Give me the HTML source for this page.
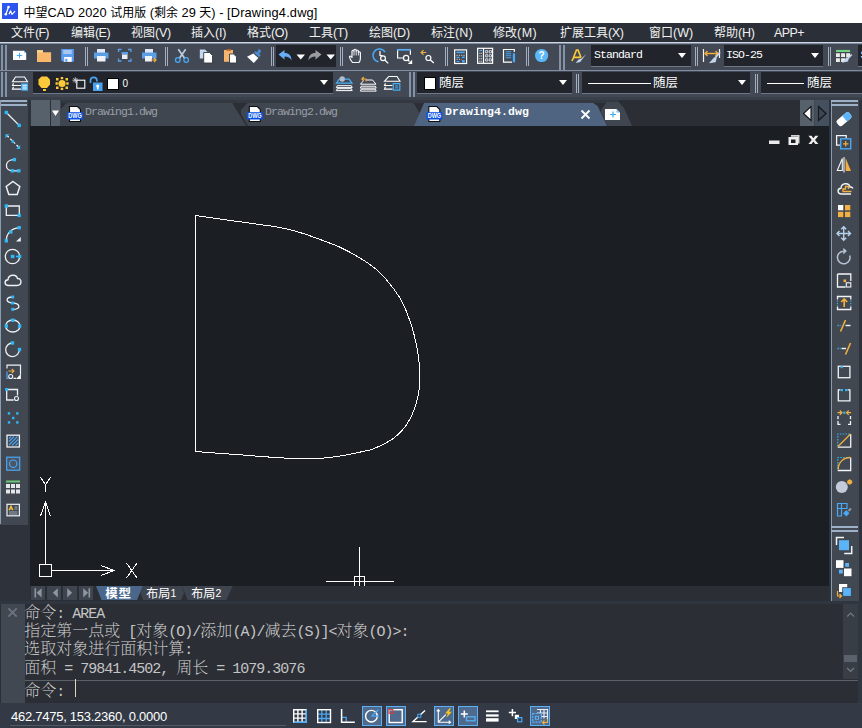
<!DOCTYPE html>
<html lang="zh"><head><meta charset="utf-8"><title>ZWCAD</title>
<style>
*{box-sizing:border-box;margin:0;padding:0}
html,body{width:862px;height:728px;overflow:hidden;background:#2e333b}
body{font-family:"Liberation Sans","Noto Sans CJK SC",sans-serif;position:relative}
.a{position:absolute}
#title{left:0;top:0;width:862px;height:23px;background:#fff}
#title .t{left:23.5px;top:4px;font-size:12.8px;line-height:18px;color:#000;white-space:nowrap}
#title .t b{font-weight:normal;font-size:12px}
#title .t u{text-decoration:none;letter-spacing:.17px}
#menu{left:0;top:23px;width:862px;height:19px;background:#2b3038}
#menu span{position:absolute;top:2px;font-size:12px;line-height:17px;color:#f0f0f0;white-space:nowrap}
#menu i{font-style:normal;font-size:12.5px}
#tb1{left:0;top:42px;width:862px;height:28px;background:#424954}
#tb2{left:0;top:71px;width:862px;height:26px;background:#424954}
.grip{position:absolute;width:2px;background:#8392a6}
.sep{position:absolute;width:1px;background:#a3afc0}
.combo{position:absolute;background:#21242b}
.combo .tx{position:absolute;color:#fff;white-space:nowrap}
.arr{position:absolute;width:0;height:0;border-left:4px solid transparent;border-right:4px solid transparent;border-top:5px solid #fff}
svg{position:absolute;overflow:visible}
#canvas{left:30px;top:126px;width:799px;height:460px;background:#1b1e23}
#ltb{left:0;top:100px;width:28px;height:425px;background:#414852}
#rtb{left:831px;top:100px;width:28px;height:501px;background:#414852}
#tabs{left:31px;top:100px;width:798px;height:26px;background:#2b2e34}
#lay{left:30px;top:586px;width:799px;height:15px;background:#2b2e34}
#cmd{left:0;top:604px;width:858px;height:99px;background:#2b2e34}
#status{left:0;top:703px;width:862px;height:25px;background:#333a45}
.mono{font-family:"Liberation Mono",monospace}
.cl{position:absolute;left:24.3px;white-space:nowrap;color:#d4d4d4;height:18px;line-height:18px}
.cl .c{font-family:"Noto Serif CJK SC",serif;font-size:16px;font-weight:200}
.cl .l{font-family:"Liberation Mono",monospace;font-size:15px;letter-spacing:-1px;color:#c4c4c4}
</style></head><body>
<div id="title" class="a">
<svg style="left:2px;top:3px" width="16" height="16" viewBox="0 0 16 16"><defs><linearGradient id="lg" x1="0" y1="0" x2="1" y2="1"><stop offset="0" stop-color="#2a5af2"/><stop offset="1" stop-color="#2f4fe8"/></linearGradient></defs><rect width="16" height="16" fill="url(#lg)"/><path d="M6.400 4.200L3.900 11.200" stroke="#fff" stroke-width="1.300" fill="none"/><circle cx="6.500" cy="4.100" r="1.300" fill="#fff"/><circle cx="3.800" cy="11.300" r="1.300" fill="#fff"/><path d="M7 11.200l1.600-3.400l1.300 3.600l3.200-3.200" stroke="#fff" stroke-width="1.200" fill="none" stroke-linejoin="round"/></svg>
<div class="a t"><b>中望</b>CAD 2020 <b>试用版</b> (<b>剩余</b> 29 <b>天</b>) - <u>[Drawing4.dwg]</u></div>
</div>
<div id="menu" class="a">
<span style="left:11px">文件<i style="letter-spacing:-0.73px">(F)</i></span><span style="left:71px">编辑<i style="letter-spacing:-0.56px">(E)</i></span><span style="left:131px">视图<i style="letter-spacing:-0.23px">(V)</i></span><span style="left:191px">插入<i style="letter-spacing:-0.14px">(I)</i></span><span style="left:247px">格式<i style="letter-spacing:-0.46px">(O)</i></span><span style="left:309px">工具<i style="letter-spacing:-0.36px">(T)</i></span><span style="left:369px">绘图<i style="letter-spacing:-0.09px">(D)</i></span><span style="left:431px">标注<i style="letter-spacing:0.11px">(N)</i></span><span style="left:493px">修改<i style="letter-spacing:0.51px">(M)</i></span><span style="left:560px">扩展工具<i style="letter-spacing:-0.43px">(X)</i></span><span style="left:649px">窗口<i style="letter-spacing:-0.05px">(W)</i></span><span style="left:714px">帮助<i style="letter-spacing:-0.26px">(H)</i></span><span style="left:774px"><i style="letter-spacing:-0.58px">APP+</i></span>
</div>
<div id="tb1" class="a">
<div class="a" style="left:0;top:-.500px;width:862px;height:1.500px;background:#cdd6e2"></div><div class="a" style="left:0;top:1px;width:862px;height:1.300px;background:#7f8ea3"></div>
<div class="grip" style="left:1px;top:3px;height:25px"></div><div class="grip" style="left:5px;top:3px;height:25px"></div>
<svg style="left:0;top:-42px" width="862" height="100" viewBox="0 0 862 100">
<!-- new -->
<path d="M13 50.700h11l2.200 2.200v7.100h-13.200z" fill="#fff"/><path d="M24 50.700v2.200h2.200z" fill="#8cc8f8"/><path d="M16.800 55.500h5.400M19.500 52.800v5.400" stroke="#45a8f5" stroke-width="1" fill="none"/>
<!-- open -->
<path d="M37 50.200h6v2h8.100v9.800h-14.100z" fill="#fab86c"/><path d="M37 50.200h6v2.300h-6z" fill="#fcd48e"/>
<!-- save -->
<path d="M61.200 49h12.700v12.800h-11l-1.700-1.700z" fill="#5b9cf0"/><rect x="63.200" y="50" width="8.500" height="4" fill="#a8c8f0"/><rect x="64.200" y="57" width="7.500" height="4.800" fill="#fff"/><rect x="65.300" y="58.800" width="2" height="3" fill="#5b9cf0"/>
<!-- print -->
<rect x="97" y="49" width="8" height="4" fill="#dfe9f5"/><path d="M94 52.500h14.500v6h-14.500z" fill="#5a9ee6"/><rect x="97" y="56" width="8.500" height="5.500" fill="#f0f3f7"/>
<!-- preview -->
<path d="M118.500 52v-2.500h3M128 49.500h3v2.500M131 58.500v2.500h-3M121.500 61h-3v-2.500" stroke="#5a9ee6" stroke-width="1.300" fill="none"/><rect x="121.500" y="52" width="6.500" height="2.500" fill="#5a9ee6"/><rect x="122" y="54.500" width="5.500" height="4.500" fill="#e8edf3"/>
<!-- plot -->
<rect x="145" y="49" width="8" height="4" fill="#dfe9f5"/><path d="M142 52.500h14.500v6h-14.500z" fill="#5a9ee6"/><rect x="145" y="56" width="7" height="5.500" fill="#f0f3f7"/><path d="M151 60h5M154 58l2 2l-2 2" stroke="#f3b040" stroke-width="1.200" fill="none"/>
<!-- cut -->
<path d="M178.300 49.300l6.300 9M185.700 49.300l-6.300 9" stroke="#bccbde" stroke-width="1.700" fill="none"/><circle cx="177.800" cy="60" r="2.300" fill="none" stroke="#4aa8f5" stroke-width="1.300"/><circle cx="186.200" cy="60" r="2.300" fill="none" stroke="#4aa8f5" stroke-width="1.300"/>
<!-- copy -->
<path d="M199.800 49.400h5.200l2.500 2.500v6.700h-7.700z" fill="#c5d8f0"/><path d="M203.700 52.500h5.800l3 3v7.500h-8.800z" fill="#fff" stroke="#333a44" stroke-width=".9"/>
<!-- paste -->
<path d="M224 50h9v11.800h-9z" fill="#f5b56e"/><rect x="226.500" y="49" width="4.500" height="1.800" fill="#b5622a"/><path d="M229.500 54h4.200l2.800 2.800v6.200h-7z" fill="#fff" stroke="#333a44" stroke-width=".9"/>
<!-- brush -->
<path d="M258.800 48.800l2.700 2.300l-2.300 2.800l1.600 1.500l-1.700 1.900l-5-4.500l1.700-1.900l1.600 1.400z" fill="#4a88d0"/><path d="M253.400 53.600l5 4.500l-4.600 4.800l-6.800-6.200z" fill="#fff"/>
<!-- undo redo -->
<rect x="276" y="45" width="60" height="22" fill="#21242b"/>
<path d="M278.500 54.500l6-4.500v3c4.500 0 7 2.500 7 7.500c-1.500-3-3.500-4-7-4v3z" fill="#66adf6"/>
<path d="M296.500 54.500h8.500l-4.250 5z" fill="#fff"/>
<path d="M321.500 54.500l-6-4.500v3c-4.500 0-7 2.500-7 7.500c1.500-3 3.500-4 7-4v3z" fill="#9a9c9f"/>
<path d="M326.500 54.500h8.500l-4.250 5z" fill="#fff"/>
<!-- hand -->
<path d="M352.500 62.500c-2-2.500-3-4.500-3-6c.7-.8 1.600-.3 2.500 1v-6.500c.5-1 1.500-1 2 0v-1c.5-1 1.700-1 2.200 0v1c.5-1 1.700-1 2.200 0v1.500c.5-1 1.800-.8 2 .2v5.800c0 2-.8 3-1.500 4z" fill="none" stroke="#f2f4f7" stroke-width="1.200" stroke-linejoin="round"/><path d="M354 51v4.500M356.200 50.500v5M358.400 51.500v4" stroke="#f2f4f7" stroke-width=".9"/>
<!-- zoom realtime -->
<path d="M385 52.200a6.400 6.400 0 1 0-6.500 9.500" fill="none" stroke="#4aa8f5" stroke-width="1.500"/><path d="M380 51v4.500h2.600" fill="none" stroke="#fff" stroke-width="1.200"/><circle cx="383" cy="58.200" r="2.400" fill="#424954" stroke="#fff" stroke-width="1.200"/><path d="M384.800 60l3.400 3.400" stroke="#fff" stroke-width="1.300"/>
<!-- zoom window -->
<path d="M397 49.800h14" stroke="#5aaef8" stroke-width="1.700"/><path d="M397.600 50.500v7.500h5.500M410.400 50.500v4.300" fill="none" stroke="#fff" stroke-width="1.200"/><circle cx="406.100" cy="58" r="2.600" fill="none" stroke="#fff" stroke-width="1.200"/><path d="M408 60l1.500 1.500" stroke="#fff" stroke-width="1.300"/><path d="M412.200 59.800v4.300h-4.400z" fill="#fff"/>
<!-- zoom prev -->
<path d="M421.300 52.500h4.800M423.500 50.200l-2.300 2.300l2.300 2.300" fill="none" stroke="#f3b040" stroke-width="1.200"/><circle cx="428.400" cy="58" r="2.500" fill="none" stroke="#fff" stroke-width="1.200"/><path d="M430.200 59.800l3.600 3.100" stroke="#fff" stroke-width="1.300"/>
<!-- calc -->
<rect x="454.600" y="49.900" width="12" height="13.600" fill="none" stroke="#fff" stroke-width="1.200"/><rect x="456.500" y="51.600" width="8.300" height="1.600" fill="#4aa8f5"/><path d="M456.500 55.300h8.300M456.500 59.300h5" stroke="#c5ccd6" stroke-width="1" stroke-dasharray="1.300 1"/><path d="M456.500 57.300h3M456.500 61.500h3" stroke="#4aa8f5" stroke-width="1.200"/><rect x="462" y="56.500" width="2.800" height="1.600" fill="#4aa8f5"/><rect x="462" y="60" width="2.800" height="2.500" fill="#4aa8f5"/>
<!-- tool palettes -->
<rect x="477.600" y="48.300" width="15" height="15" fill="none" stroke="#fff" stroke-width="1.200"/><path d="M483.500 48.300v15" stroke="#fff" stroke-width="1.200"/><path d="M479.300 50.500h2.700" stroke="#4aa8f5" stroke-width="1.200"/><path d="M479.300 53.300h2.700M479.300 56h2.700M479.300 58.700h2.700M479.300 61.300h2.700" stroke="#dfe4ea" stroke-width="1.100" stroke-dasharray="1.200 .6"/><path d="M485.600 50.600h2.200v2.200h-2.200zM489.300 50.600h2.200v2.200h-2.200zM485.600 54.700h2.200v2.200h-2.200zM489.300 54.700h2.200v2.200h-2.200zM485.600 58.800h2.200v2.200h-2.200zM489.300 58.800h2.200v2.200h-2.200z" fill="none" stroke="#dfe4ea" stroke-width=".9"/>
<!-- properties -->
<path d="M514.300 52v-2.500h-10.800v12.700h8.500" fill="none" stroke="#fff" stroke-width="1.200"/><path d="M505.700 51.800h5.500M505.700 53.800h5.500M505.700 55.800h5.500M505.700 57.800h5.500" stroke="#4aa8f5" stroke-width="1.100"/><rect x="512.800" y="53.300" width="2.300" height="9" fill="#4aa8f5"/>
<!-- help -->
<circle cx="541.600" cy="55.500" r="6.600" fill="#5ab8f8"/>
<text x="541.600" y="59.200" font-family="Liberation Sans,sans-serif" font-size="10" font-weight="bold" fill="#fff" text-anchor="middle">?</text>
<!-- text style -->
<path d="M572 61l1.500-3.500l3-7.500h1.500l3 7.500M573.500 57.300h7.500" fill="none" stroke="#fcc93a" stroke-width="1.700"/><path d="M586.300 54l-5.500 5l-2.300 .500l-2.800 3.500l4.500-1l1.500-2z" fill="#c5d5ea"/>
<!-- dim style -->
<path d="M703.500 49v13M719.500 49v9" stroke="#f2f4f7" stroke-width="1.200"/><path d="M705 53.500h13M707.500 51l-2.500 2.500l2.500 2.500M715.500 51l2.500 2.500l-2.500 2.500" fill="none" stroke="#f3b040" stroke-width="1.300"/><path d="M720 52.300l-4.600 5.300" stroke="#c5d5ea" stroke-width="1.700" fill="none"/><path d="M716.800 57.800l-2.600-.600l-5.200 6.100l6.600-1.100z" fill="#c5d5ea"/>
<!-- table style -->
<rect x="836" y="49.900" width="14.100" height="2.100" fill="#6fd080"/><path d="M836 53.200h3.900v3.700h-3.900zM841.100 53.200h3.900v3.700h-3.900zM846.200 53.200h3.900v3.700h-3.900zM836 58.200h3.900v3.700h-3.900zM841.100 58.200h3.900v3.700h-3.900z" fill="#ecece6"/><path d="M851.700 54.500l-3.700 4" stroke="#c5d5ea" stroke-width="1.800" fill="none"/><path d="M848.900 57.800l-2.400-.600l-4.500 5.600l6-1.200z" fill="#c5d5ea"/>
</svg>
<div class="sep" style="left:85px;top:5px;height:19px"></div><div class="sep" style="left:87px;top:5px;height:19px"></div>
<div class="sep" style="left:165px;top:5px;height:19px"></div><div class="sep" style="left:167px;top:5px;height:19px"></div>
<div class="sep" style="left:271px;top:5px;height:19px"></div><div class="sep" style="left:273px;top:5px;height:19px"></div>
<div class="sep" style="left:340px;top:5px;height:19px"></div><div class="sep" style="left:342px;top:5px;height:19px"></div>
<div class="sep" style="left:445px;top:5px;height:19px"></div><div class="sep" style="left:447px;top:5px;height:19px"></div>
<div class="sep" style="left:526px;top:5px;height:19px"></div><div class="sep" style="left:528px;top:5px;height:19px"></div>
<div class="grip" style="left:559px;top:3px;height:25px"></div><div class="grip" style="left:563px;top:3px;height:25px"></div>
<div class="combo" style="left:591px;top:3px;width:99.500px;height:22px;border-bottom:1px solid #6c7788"><span class="tx mono" style="left:3px;top:3px;font-size:11.500px;letter-spacing:-.9px;line-height:14px">Standard</span><i class="arr" style="left:87px;top:8px"></i></div>
<div class="sep" style="left:695px;top:5px;height:19px"></div><div class="sep" style="left:697px;top:5px;height:19px"></div>
<div class="combo" style="left:724px;top:3px;width:99px;height:22px;border-bottom:1px solid #6c7788"><span class="tx mono" style="left:2px;top:3px;font-size:11.500px;letter-spacing:-.9px;line-height:14px">ISO-25</span><i class="arr" style="left:87px;top:8px"></i></div>
<div class="sep" style="left:828px;top:5px;height:19px"></div><div class="sep" style="left:830px;top:5px;height:19px"></div>
<div class="combo" style="left:857.500px;top:3px;width:6px;height:22px;overflow:hidden;border-bottom:1px solid #6c7788"><span class="tx mono" style="left:3px;top:3px;font-size:11.500px;letter-spacing:-.9px;line-height:14px">Standard</span></div>
</div>
<div id="tb2" class="a">
<div class="a" style="left:0;top:-1px;width:862px;height:1.400px;background:#7f8ea3"></div>
<div class="grip" style="left:1px;top:1px;height:25px"></div><div class="grip" style="left:5px;top:1px;height:25px"></div>
<div class="combo" style="left:33px;top:1px;width:300px;height:21px;border-bottom:1px solid #6c7788;box-sizing:content-box"><i class="arr" style="left:287px;top:8px"></i><span class="tx" style="left:89.500px;top:5px;font-size:10px;line-height:14px">0</span></div>
<div class="combo" style="left:417px;top:1px;width:155px;height:21px;border-bottom:1px solid #6c7788;box-sizing:content-box"><span class="tx" style="left:22px;top:3px;font-size:12.500px;line-height:17px">随层</span><i class="arr" style="left:142px;top:8px"></i><b class="a" style="left:7px;top:5px;width:11px;height:11px;background:#fff;border:1px solid #000;box-sizing:content-box;left:6.500px;top:5px;width:10.500px;height:10.500px"></b></div>
<div class="combo" style="left:581.500px;top:1px;width:168.500px;height:21px;border-bottom:1px solid #6c7788;box-sizing:content-box"><b class="a" style="left:6px;top:11px;width:63px;height:1px;background:#fff"></b><span class="tx" style="left:71.500px;top:3px;font-size:12.500px;line-height:17px">随层</span><i class="arr" style="left:156px;top:8px"></i></div>
<div class="combo" style="left:761px;top:1px;width:101px;height:21px;border-bottom:1px solid #6c7788;box-sizing:content-box"><b class="a" style="left:6px;top:11px;width:37px;height:1px;background:#fff"></b><span class="tx" style="left:46px;top:3px;font-size:12.500px;line-height:17px">随层</span></div>
<svg style="left:0;top:-71px" width="862" height="100" viewBox="0 0 862 100">
<!-- layer mgr -->
<path d="M15.500 77h9l3 4.800h-15zM13.500 83.200l-1 2.300h8.500M13.500 86.800l-1 2.300h8.500" fill="none" stroke="#fff" stroke-width="1.100"/><rect x="21.200" y="83.400" width="6.800" height="7.300" fill="#4ab0f8"/><path d="M22.500 85.300h4.300M22.500 87.100h4.300M22.500 88.900h4.300" stroke="#fff" stroke-width=".9"/>
<!-- bulb -->
<path d="M41.500 76.500h5.500l3 3v5l-3 3.500h-5.500l-3-3.500v-5z" fill="#fcc93a"/><rect x="43" y="89" width="3" height="2" fill="#fcc93a"/>
<!-- sun -->
<circle cx="62" cy="83.500" r="3.600" fill="#fcc93a"/><path d="M56 78h2.500v2.500h-2.500zM60.700 77h2.500v2.300h-2.500zM65.500 78h2.500v2.500h-2.500zM55.500 82.300h2.300v2.500h-2.300zM66.300 82.300h2.300v2.500h-2.300zM56 86.500h2.500v2.500h-2.500zM60.700 87.700h2.500v2.300h-2.500zM65.500 86.500h2.500v2.500h-2.500z" fill="#fcc93a"/>
<!-- vp freeze -->
<rect x="76.800" y="80.200" width="8" height="8" fill="none" stroke="#fff" stroke-width="1.100"/><path d="M72.300 80.200h6M75.300 77.200v6M73.200 78.100l4.200 4.200M77.400 78.100l-4.200 4.200" stroke="#d5dae0" stroke-width=".8"/>
<!-- lock -->
<path d="M90.500 83v-2.500a3.200 3.200 0 0 1 6.400 0v1" fill="none" stroke="#4aa3f0" stroke-width="1.700"/><rect x="93" y="82.500" width="9.500" height="8.500" fill="#4aa3f0"/><circle cx="97.700" cy="86" r="1.500" fill="#fff"/><rect x="97" y="86.500" width="1.500" height="3" fill="#fff"/>
<!-- color -->
<rect x="107.500" y="78.500" width="11" height="11" fill="#fff" stroke="#000" stroke-width="1"/>
<!-- layer icons -->
<path d="M337.200 85.700h14.200l.800 1.900h-15.800zM337.200 88.700h14.200l.800 1.900h-15.800z" fill="none" stroke="#fff" stroke-width="1"/><path d="M339.300 79.200h9.700l3 4h-15.600z" fill="none" stroke="#4ab0f8" stroke-width="1.200"/><circle cx="342.200" cy="79" r="2.700" fill="#b0bccc"/>
<path d="M366 80h6.500l3.500 4.200h-15.500l2.500-3M361.200 86.200h14.200l.800 1.900h-15.800zM361.200 89.200h14.200l.800 1.900h-15.800z" fill="none" stroke="#fff" stroke-width="1"/><path d="M366 81.500v-2.500h-4.200M363.800 77l-2 2l2 2" fill="none" stroke="#f3b040" stroke-width="1.100"/>
<path d="M388.800 76.500h8.200l3 4.800h-15.500zM385.500 83.200l-1 2.300h8M385.500 86.800l-1 2.300h8" fill="none" stroke="#fff" stroke-width="1.100"/><rect x="393.300" y="83.600" width="6.500" height="6.500" fill="#424954" stroke="#4ab0f8" stroke-width="1.200"/><path d="M395.200 85.900h2.800M395.200 87.900h2.800" stroke="#4ab0f8" stroke-width="1"/>
</svg>
<div class="grip" style="left:409px;top:1px;height:25px"></div><div class="grip" style="left:413px;top:1px;height:25px"></div>
<div class="sep" style="left:576px;top:3px;height:19px"></div><div class="sep" style="left:578px;top:3px;height:19px"></div>
<div class="sep" style="left:755px;top:3px;height:19px"></div><div class="sep" style="left:757px;top:3px;height:19px"></div>
</div>
<div class="a" style="left:0;top:97px;width:862px;height:2.500px;background:#3a4049"></div>
<div id="ltb" class="a">
<div class="a" style="left:0;top:0;width:1px;height:424px;background:#8a9cb3"></div>
<div class="a" style="left:1px;top:0;width:26px;height:2px;background:#9db0c8"></div>
<div class="a" style="left:1px;top:4px;width:26px;height:2px;background:#9db0c8"></div>
<svg style="left:0;top:-100px" width="40" height="540" viewBox="0 0 40 540" fill="none" stroke="#eef1f5" stroke-width="1.300">
<path d="M6.300 112.500L19.200 125.400"/><rect x="4.6" y="110.8" width="3.4" height="3.4" fill="#2fb8f5" stroke="none"/><rect x="17.5" y="123.7" width="3.4" height="3.4" fill="#2fb8f5" stroke="none"/>
<path d="M7 135.500L19 147.500" stroke-dasharray="2.500 2"/><rect x="11.5" y="140.2" width="2.6" height="2.6" fill="#2fb8f5" stroke="none"/><path d="M5.400 134.200h4l-4 4zM20.200 149h-4l4-4z" fill="#2fb8f5" stroke="none"/>
<path d="M14.400 159.600c-5.500 0-8 3-8 6c0 3 2.500 5.200 6 5.200h6.400"/><rect x="12.7" y="157.9" width="3.4" height="3.4" fill="#2fb8f5" stroke="none"/><rect x="10.8" y="169.1" width="3.4" height="3.4" fill="#2fb8f5" stroke="none"/><rect x="17.1" y="169.1" width="3.4" height="3.4" fill="#2fb8f5" stroke="none"/>
<path d="M13 181.500l6.800 5l-2.600 8h-8.400l-2.600-8z" stroke-width="1.500"/>
<path d="M6.300 206h13v9.400h-13z"/><rect x="4.6" y="204.3" width="3.4" height="3.4" fill="#2fb8f5" stroke="none"/><rect x="17.5" y="213.7" width="3.4" height="3.4" fill="#2fb8f5" stroke="none"/>
<path d="M6.300 240.800c0-7 5-13 13-13"/><rect x="4.6" y="239.1" width="3.4" height="3.4" fill="#2fb8f5" stroke="none"/><rect x="9.1" y="230.3" width="3.4" height="3.4" fill="#2fb8f5" stroke="none"/><rect x="17.5" y="226.0" width="3.4" height="3.4" fill="#2fb8f5" stroke="none"/><path d="M20.800 237v4.500h-4.800z" fill="#eef1f5" stroke="none"/>
<circle cx="12.500" cy="256.500" r="7.200"/><path d="M12.500 256.500h7" stroke="#2fb8f5" stroke-dasharray="2 1.500"/><rect x="10.8" y="254.8" width="3.4" height="3.4" fill="#2fb8f5" stroke="none"/><rect x="17.9" y="254.8" width="3.4" height="3.4" fill="#2fb8f5" stroke="none"/>
<path d="M8.500 285.500c-4.500 0-4.500-5.500-.500-5.800c.300-5.500 8.500-6 9.500-1.200c4.500-.500 4.800 7-.500 7z" stroke-width="1.400"/>
<path d="M12.700 297c-7 0-8 5.500 0 6c8 .500 8.500 6.500 0 6.500"/><rect x="11.2" y="295.5" width="3.0" height="3.0" fill="#2fb8f5" stroke="none"/><rect x="11.2" y="301.5" width="3.0" height="3.0" fill="#2fb8f5" stroke="none"/><rect x="11.2" y="307.8" width="3.0" height="3.0" fill="#2fb8f5" stroke="none"/>
<ellipse cx="12.800" cy="326" rx="7.200" ry="6"/><rect x="4.6" y="324.3" width="3.4" height="3.4" fill="#2fb8f5" stroke="none"/><rect x="11.1" y="318.5" width="3.4" height="3.4" fill="#2fb8f5" stroke="none"/><rect x="17.9" y="324.3" width="3.4" height="3.4" fill="#2fb8f5" stroke="none"/>
<path d="M12.500 343a6.800 6.800 0 1 0 6.800 6.500"/><rect x="10.8" y="341.3" width="3.4" height="3.4" fill="#2fb8f5" stroke="none"/><rect x="17.8" y="347.8" width="3.4" height="3.4" fill="#2fb8f5" stroke="none"/>

<path d="M7 368.500v-3.300h13.500v9.500M13.500 378.300h2.500" stroke-width="1.200"/><path d="M7 371.500v6.800h1.500" stroke="#4aa8f5" stroke-width="1.200"/><circle cx="10.700" cy="376.500" r="2" stroke-width="1.100"/><path d="M20.900 374v4.900h-4.900z" fill="#fff" stroke="none"/><path d="M8.500 371h5.500M11.800 368.800l2.200 2.200l-2.200 2.200" stroke="#f3b040" stroke-width="1.100"/>
<path d="M6.700 389.500h10.800v6M6.700 389.500v10.500h7"/><rect x="5.2" y="388.0" width="3.0" height="3.0" fill="#2fb8f5" stroke="none"/><circle cx="16.500" cy="398.500" r="2" stroke-width="1.100"/>
<rect x="7.8" y="412.2" width="2.4" height="2.4" fill="#2fb8f5" stroke="none"/><rect x="16.1" y="412.2" width="2.4" height="2.4" fill="#2fb8f5" stroke="none"/><rect x="12.0" y="416.8" width="2.4" height="2.4" fill="#2fb8f5" stroke="none"/><rect x="7.8" y="421.2" width="2.4" height="2.4" fill="#2fb8f5" stroke="none"/><rect x="16.1" y="421.2" width="2.4" height="2.4" fill="#2fb8f5" stroke="none"/>
<rect x="7" y="435.200" width="12.400" height="11.800"/><path d="M9 445l8.500-8.500M9 441.500l5-5M12 445.500l6-6M15.500 445.500l2.500-2.500M9 438.500l2-2" stroke="#4aa3f0" stroke-width="1.100"/>
<rect x="6.700" y="457.200" width="13" height="13" fill="#4b5564" stroke="#4aa8f5" stroke-width="1.200"/><circle cx="13.200" cy="463.700" r="3.700" stroke="#4aa8f5" stroke-width="1.200"/>
<rect x="6" y="480.500" width="14" height="2" fill="#6cc878" stroke="none"/><path d="M6 484h4v4h-4zM11 484h4v4h-4zM16 484h4v4h-4zM6 489.500h4v4h-4zM11 489.500h4v4h-4zM16 489.500h4v4h-4z" fill="#e4e7ea" stroke="none"/>
<rect x="7" y="504.300" width="12.400" height="11.500" stroke-width="1.200"/><path d="M9 510.300l2-4.200l2 4.200M9.700 509h2.600" stroke="#fcc93a" stroke-width="1.200"/><path d="M14.500 507h3M14.500 509h3M9 512h8.500M9 514h8.500" stroke="#b8c4d4" stroke-width=".8"/>
</svg>
</div>
<div id="tabs" class="a">
<svg style="left:-31px;top:-100px" width="862" height="140" viewBox="0 0 862 140">
<rect x="31" y="100" width="19" height="26" fill="#56616b"/><rect x="51" y="100" width="9.500" height="26" fill="#56616b"/>
<path d="M52 110.500h7l-3.500 5.500z" fill="#fff"/>
<rect x="60.500" y="100" width="558" height="3" fill="#343941"/><path d="M247.500 103h166l14 23h-186.500v-16z" fill="#40464f"/>
<path d="M233.500 102.500l14 23.500" stroke="#2b2e34" stroke-width="1" fill="none"/>
<path d="M66.500 103h166.500l14 23h-186.500v-16.500z" fill="#40464f"/>
<path d="M233 103l14 23" stroke="#2a2d33" stroke-width="1.200" fill="none"/>
<path d="M607 102h11.500l5.500 6l8 18h-31v-16z" fill="#40464f"/>
<path d="M424 103h169.500l4.500 3l9.500 20h-193.500z" fill="#4f6480"/>
<path d="M594 103l4 3l9.500 20" stroke="#2a2d33" stroke-width="1" fill="none" opacity=".6"/>
<path d="M69.5 106.500h8l3 3v12h-11z" fill="#fbfbfb" stroke="#0c0e11" stroke-width="1.100"/><rect x="67.2" y="112.200" width="15.800" height="7.300" fill="#0a50e6"/><text x="75.1" y="118.400" font-family="Liberation Sans,sans-serif" font-size="7" font-weight="bold" fill="#fff" text-anchor="middle" textLength="13.500" lengthAdjust="spacingAndGlyphs">DWG</text><path d="M249.3 106.500h8l3 3v12h-11z" fill="#fbfbfb" stroke="#0c0e11" stroke-width="1.100"/><rect x="247.0" y="112.200" width="15.800" height="7.300" fill="#0a50e6"/><text x="254.9" y="118.400" font-family="Liberation Sans,sans-serif" font-size="7" font-weight="bold" fill="#fff" text-anchor="middle" textLength="13.500" lengthAdjust="spacingAndGlyphs">DWG</text><path d="M428.8 106.500h8l3 3v12h-11z" fill="#fbfbfb" stroke="#0c0e11" stroke-width="1.100"/><rect x="426.5" y="112.200" width="15.800" height="7.300" fill="#0a50e6"/><text x="434.4" y="118.400" font-family="Liberation Sans,sans-serif" font-size="7" font-weight="bold" fill="#fff" text-anchor="middle" textLength="13.500" lengthAdjust="spacingAndGlyphs">DWG</text>
<text x="85" y="115" font-family="Liberation Mono,monospace" font-size="11.500" letter-spacing="-.9" fill="#989ea6">Drawing1.dwg</text>
<text x="265" y="115" font-family="Liberation Mono,monospace" font-size="11.500" letter-spacing="-.9" fill="#989ea6">Drawing2.dwg</text>
<text x="445" y="115" font-family="Liberation Mono,monospace" font-size="11.500" font-weight="bold" letter-spacing=".1" fill="#fff">Drawing4.dwg</text>
<path d="M581.500 110.500l8 8M589.500 110.500l-8 8" stroke="#fff" stroke-width="1.900" fill="none"/>
<path d="M605 109h11.500l3.500 3.500v7.500h-15z" fill="#fff"/><path d="M616.500 109v3.500h3.500z" fill="#7cc0f5"/><path d="M610 114.500h6M613 111.500v6" stroke="#3fa9f5" stroke-width="1.200"/>
<rect x="800" y="100" width="14.500" height="26" fill="#56616b"/><rect x="815" y="100" width="14" height="26" fill="#45505e"/>
<path d="M811 106.500v14l-7.500-7z" fill="#fff" stroke="#0e1013" stroke-width="1.100"/>
<path d="M818.500 106.500v14l7.500-7z" fill="#3d4653" stroke="#15181c" stroke-width="1.200"/>
</svg>
</div>
<div id="canvas" class="a">
<svg style="left:-30px;top:-126px" width="862" height="728" viewBox="0 0 862 728" shape-rendering="crispEdges" fill="none" stroke="#fff" stroke-width="1">
<path d="M195.5 215.5C202.9 216.6 225.9 219.8 240.0 221.8C254.1 223.8 269.9 225.7 280.0 227.5C290.1 229.3 293.7 230.6 300.6 232.7C307.5 234.8 314.3 237.3 321.2 239.9C328.1 242.5 334.9 244.8 341.8 248.1C348.7 251.4 356.2 255.6 362.4 259.5C368.6 263.4 373.8 267.0 378.9 271.8C384.0 276.6 389.2 282.8 393.3 288.3C397.4 293.8 400.5 298.4 403.6 304.8C406.7 311.2 409.8 320.6 411.9 327.0C414.0 333.4 414.9 338.0 416.0 343.0C417.1 348.0 417.9 352.1 418.5 356.8C419.1 361.5 419.5 366.7 419.7 371.2C419.9 375.7 420.0 379.1 419.7 383.6C419.4 388.1 418.6 393.5 417.6 398.0C416.6 402.5 415.5 406.3 413.9 410.4C412.3 414.5 409.9 419.3 407.8 422.7C405.8 426.1 404.2 428.2 401.6 431.0C399.0 433.8 395.4 437.0 392.3 439.2C389.2 441.4 386.3 442.8 383.0 444.4C379.7 446.0 376.1 447.9 372.7 449.1C369.3 450.3 366.5 450.7 362.4 451.6C358.3 452.5 352.5 453.9 348.0 454.7C343.5 455.5 340.1 456.1 335.6 456.7C331.1 457.3 327.0 457.9 321.2 458.2C315.4 458.5 307.5 458.7 300.6 458.6C293.7 458.5 290.1 458.4 280.0 457.8C269.9 457.2 254.1 455.9 240.0 454.8C225.9 453.8 202.9 452.1 195.5 451.5Z"/>
<!--UCS-->
<rect x="39.5" y="564.5" width="12" height="12"/>
<path d="M45.5 564V502M40.5 516L45.5 502L50.5 516M51.5 570.5H114M101 565.5L114 570.5L101 575.5"/>
<path d="M40.5 477.5L45.5 484.5L50.5 477.5M45.5 484.5V492M126.5 563L137 578M137 563L126.5 578"/>
<!--winctl-->
<g stroke="none" shape-rendering="auto"><rect x="769" y="140.500" width="10.500" height="3.500" fill="#e9e9e9"/>
<path d="M791 135h8.500v8.500h-1.700v-6.800h-6.800z" fill="#d4d4d4"/>
<path d="M788.500 137h9.500v8h-9.500zM791 139.500v3.500h4.500v-3.500z" fill="#efefef" fill-rule="evenodd"/>
<path d="M808.400 135.800h3.200l1.800 2.400l1.800-2.400h3.200l-3.400 4.100l3.400 4.100h-3.200l-1.800-2.400l-1.800 2.400h-3.200l3.400-4.100z" fill="#efefef"/></g>
<!--cross-->
<path d="M359.5 547V586M326 581.5H394M354.5 586V576.5H364.5V586"/>
</svg>
</div>
<div id="rtb" class="a">
<div class="a" style="left:0;top:0;width:1px;height:501px;background:#8a9cb3"></div>
<div class="a" style="left:0;top:0;width:27px;height:2px;background:#9db0c8"></div>
<div class="a" style="left:0;top:4px;width:27px;height:2px;background:#9db0c8"></div>
<div class="a" style="left:0;top:426px;width:27px;height:2px;background:#9db0c8"></div>
<div class="a" style="left:0;top:430px;width:27px;height:2px;background:#9db0c8"></div>
<svg style="left:-831px;top:-100px" width="862" height="620" viewBox="0 0 862 620" fill="none" stroke="#f2f4f7" stroke-width="1.300">
<g transform="rotate(-40 844 119.200)"><rect x="836" y="115.500" width="16" height="7.400" rx="2.400" fill="#fff" stroke="none"/><path d="M844.800 115.500h4.800a2.400 2.400 0 0 1 2.400 2.400v2.600a2.400 2.400 0 0 1-2.400 2.400h-4.800z" fill="#5ab4f7" stroke="none"/></g>
<path d="M846.200 138v-2.400h-9.600v9.600h3.300"/><rect x="840.700" y="138.800" width="10" height="10" stroke="#4aa8f5" stroke-width="1.400"/><path d="M843 143.800h5.400M845.700 141.100v5.400" stroke="#f3b040" stroke-width="1.200"/>
<path d="M842.300 158.500v12h-5z" stroke-width="1.100"/><path d="M844 157v15.500" stroke-width="1.100"/><path d="M845.600 158v13h5.400z" fill="#f3b040" stroke="none"/>
<path d="M851 194h-9.500c-4.500 0-4.500-5.500-.500-5.800c.300-5.500 8-6 9-1.200c1.500-.200 2.500 .500 3 1.500" stroke-width="1.400"/><path d="M851.500 191.500h-8.500v-2.500h2.500v-2.500h3v2.500" stroke="#f3b040" stroke-width="1.400"/>
<rect x="838" y="205" width="5.300" height="5.300" fill="#fff" stroke="none"/><rect x="845" y="205" width="5.300" height="5.300" fill="#f3b040" stroke="none"/><rect x="838" y="211.800" width="5.300" height="5.300" fill="#f3b040" stroke="none"/><rect x="845" y="211.800" width="5.300" height="5.300" fill="#f3b040" stroke="none"/>
<path d="M843.700 227v13M837.200 233.500h13M841.200 229.300l2.500-2.500l2.500 2.500M841.200 237.700l2.500 2.500l2.500-2.500M839.500 231l-2.500 2.500l2.500 2.500M848 231l2.500 2.500l-2.500 2.500" stroke="#b5d0ec" stroke-width="1.400"/>
<path d="M843.700 251.200a6.300 6.300 0 1 0 6 4.300" stroke="#b4c2d4" stroke-width="1.500"/><path d="M843.300 247.800l3.600 3.300l-3.600 3.300z" fill="#b4c2d4" stroke="none"/>
<path d="M837.500 274h13.300v7M837.500 274v13h8"/><rect x="843.500" y="279.500" width="2.600" height="2.600" fill="#f3b040" stroke="none"/><rect x="846.300" y="282.800" width="4.500" height="4.200" stroke-width="1.100"/>
<path d="M837.500 299.500v-3h13.300v3M837.500 306.500v3h13.300v-3"/><path d="M837.500 300.500v5.500M850.800 300.500v5.500" stroke="#2fb8f5" stroke-width="1.200" stroke-dasharray="1.300 1.200"/><path d="M844.200 307v-8M841.200 302l3-3l3 3" stroke="#f3b040" stroke-width="1.700"/>
<path d="M840.500 331.500l5-11.500" stroke="#f3b040" stroke-width="1.600"/><path d="M837.500 325.500h3" stroke="#2fb8f5" stroke-dasharray="1.300 1" stroke-width="1.300"/><path d="M845.500 325.500h5" stroke-width="1.400"/>
<path d="M845.500 354.500l5-11.500" stroke="#f3b040" stroke-width="1.600"/><path d="M837.500 348.500h3" stroke="#2fb8f5" stroke-dasharray="1.300 1" stroke-width="1.300"/><path d="M841.500 348.500h4.500" stroke-width="1.400"/>
<rect x="838.300" y="366.300" width="11.600" height="11.400"/><rect x="840.500" y="366" width="2.200" height="2.200" fill="#2fb8f5" stroke="none"/>
<path d="M840.500 389.800h-2.200v11h11.600v-11h-2.400"/><rect x="840.800" y="389" width="2.200" height="2.200" fill="#2fb8f5" stroke="none"/><rect x="845" y="389" width="2.200" height="2.200" fill="#2fb8f5" stroke="none"/>
<path d="M837.500 412.700h4.500M839.800 410.500l2.200 2.200l-2.200 2.200M851 412.700h-4.500M848.700 410.500l-2.200 2.200l2.200 2.200" stroke="#f3b040" stroke-width="1.200"/><rect x="843.200" y="411.600" width="2.200" height="2.200" fill="#2fb8f5" stroke="none"/><path d="M838 416v3.300M838 421v3.300h2.500M850.500 416v3.300M850.500 421v3.300h-2.500"/>
<path d="M850.700 434v13.200h-13"/><path d="M837.800 446v-12h12" stroke="#2fb8f5" stroke-width="1.200" stroke-dasharray="1.500 1.300"/><path d="M838 446.500l12.500-12.500" stroke="#f3b040" stroke-width="1.300"/>
<path d="M850.700 457.500v13h-13"/><path d="M837.800 469v-11.500h12" stroke="#2fb8f5" stroke-width="1.200" stroke-dasharray="1.500 1.300"/><path d="M838.200 469.500c0-7 5-12 12.200-12" stroke="#f3b040" stroke-width="1.300"/>
<circle cx="841.800" cy="487" r="6" fill="#c3cbdb" stroke="none"/><path d="M846 484.500c1-1.500 2-2 3-2" stroke="#8a94a4" stroke-width="1"/><path d="M849.700 479.300v5.400M847 482h5.400M847.900 480.200l3.600 3.600M851.500 480.200l-3.600 3.600" stroke="#f3b040" stroke-width="1.300"/>
<path d="M837.500 503.500h9.500v5h-9.500zM837.500 503.500v12.500h4v-7.500M841.500 503.500v5" stroke="#4aa8f5" stroke-width="1.200"/><path d="M846.300 510l3.200 3.200l-3.200 3.200l-3.200-3.200z" fill="#4aa8f5" stroke="none"/><path d="M848.500 511l2.500-2.500" stroke="#8a94a4" stroke-width="2.200"/>
<path d="M836.500 545v-7.500h7.500M851.700 546v7.500h-7.500" stroke-width="1.500"/><rect x="839" y="540.200" width="10" height="10" fill="#5ab4f7" stroke="none"/>
<rect x="836" y="560.200" width="7.500" height="7.700" fill="#fff" stroke="none"/><rect x="844" y="568.500" width="7.500" height="7.700" fill="#fff" stroke="none"/><rect x="845.200" y="563" width="3.800" height="3.800" fill="#5ab4f7" stroke="none"/><rect x="839" y="569.700" width="3.800" height="3.800" fill="#5ab4f7" stroke="none"/>
<rect x="839" y="584" width="8.200" height="8" fill="#fff" stroke="none"/><rect x="842.700" y="587.700" width="8.600" height="8.600" fill="#5ab4f7" stroke="#3a4049" stroke-width=".8"/><path d="M837.500 591v5h3.500M839.500 594l2 2l-2 2" stroke="#f3b040" stroke-width="1.200"/>
</svg>
</div>
<div id="lay" class="a">
<svg style="left:-30px;top:-586px" width="862" height="620" viewBox="0 0 862 620">
<rect x="31" y="586" width="14" height="14" fill="#3f454e"/><rect x="47" y="586" width="14" height="14" fill="#3f454e"/><rect x="63" y="586" width="14" height="14" fill="#3f454e"/><rect x="79" y="586" width="14" height="14" fill="#3f454e"/>
<path d="M34.500 588.200h1.600v9.200h-1.600zM41.600 588.200v9.200l-5-4.600zM57.800 588.200v9.200l-5-4.600zM67.200 588.200v9.200l5-4.600zM83.200 588.200v9.200l5-4.600zM88.500 588.200h1.600v9.200h-1.600z" fill="#8d96a1"/>
<path d="M143.400 586h38.200l2.400 7l-2.800 7h-38.200l-2.400-7zM181.800 586h51l-6.500 14h-38.600z" fill="#3f454e"/>
<path d="M96 586h47l-6 14h-35.500z" fill="#4a678b"/>
<text x="105.300" y="598" font-family="Noto Sans CJK SC,sans-serif" font-size="12.500" font-weight="bold" fill="#fff" letter-spacing=".8">模型</text>
<text x="146.300" y="597.500" font-family="Liberation Sans,Noto Sans CJK SC,sans-serif" font-size="12" fill="#fff">布局<tspan font-size="10.5" dx=".3" dy="-.5">1</tspan></text>
<text x="191.300" y="597.500" font-family="Liberation Sans,Noto Sans CJK SC,sans-serif" font-size="12" fill="#fff">布局<tspan font-size="10.5" dx=".3" dy="-.5">2</tspan></text>
</svg>
</div>
<div id="cmd" class="a">
<div class="a" style="left:0;top:-3px;width:862px;height:3px;background:#30363f"></div>
<div class="a" style="left:1px;top:0;width:24px;height:99px;background:#414852"></div>
<svg style="left:0;top:0" width="30" height="30" viewBox="0 0 30 30"><path d="M8.400 4.300l8.300 8.300M16.700 4.300l-8.300 8.300" stroke="#6c747f" stroke-width="1.900" fill="none"/></svg>
<div class="cl" style="top:-1px"><span class="c">命令</span><span class="l">: AREA</span></div>
<div class="cl" style="top:17px"><span class="c">指定第一点或</span><span class="l"> [</span><span class="c">对象</span><span class="l">(O)/</span><span class="c">添加</span><span class="l">(A)/</span><span class="c">减去</span><span class="l">(S)]&lt;</span><span class="c">对象</span><span class="l">(O)&gt;:</span></div>
<div class="cl" style="top:35px"><span class="c">选取对象进行面积计算</span><span class="l">:</span></div>
<div class="cl" style="top:54px"><span class="c">面积</span><span class="l"> = 79841.4502, </span><span class="c">周长</span><span class="l"> = 1079.3076</span></div>
<div class="a" style="left:25px;top:75.500px;width:833px;height:1px;background:#5a616b"></div>
<div class="cl" style="top:77px"><span class="c">命令</span><span class="l">: </span></div>
<div class="a" style="left:75px;top:75px;width:1px;height:18px;background:#ddd5c4"></div>
<div class="a" style="left:843px;top:0;width:15px;height:75px;background:#393d45"></div>
<div class="a" style="left:844px;top:51px;width:13px;height:7px;background:#5a616c"></div>
<svg style="left:843px;top:0" width="16" height="76" viewBox="0 0 16 76"><path d="M4.200 12.500l3.400-3.400l3.400 3.400M4.200 64l3.400 3.400l3.400-3.400" stroke="#727a85" stroke-width="1.300" fill="none"/></svg>
</div>
<div class="a" style="left:858px;top:601px;width:4px;height:102px;background:#30363f"></div>
<div id="status" class="a">
<div class="a" style="left:11px;top:4.500px;font-size:13px;line-height:18px;color:#fff;white-space:nowrap;letter-spacing:-.26px" id="coord">462.7475, 153.2360, 0.0000</div>
<div class="a" style="left:10px;top:22px;width:276px;height:1px;background:#535a66"></div>
<svg style="left:0;top:-703px" width="862" height="728" viewBox="0 0 862 728" fill="none" stroke="#fff" stroke-width="1.300">
<path d="M293.700 709.700h12.600v12.600h-12.600zM297.900 709.700v12.600M302.100 709.700v12.600M293.700 713.900h12.600M293.700 718.100h12.600" stroke-width="1.400"/><path d="M306.300 709.500v13.200M293.500 722.300h13" stroke="#4aa8f5" stroke-width="1.500"/>
<path d="M321.800 710v12.500M326.200 710v12.500M318 714.200h12.500M318 718.500h12.500" stroke="#4aa8f5" stroke-width="1.300"/><rect x="317.700" y="709.700" width="12.800" height="12.800" stroke-width="1.400"/>
<path d="M342 717.300h4.200v4.500" stroke="#4aa8f5" stroke-width="1.300"/><path d="M341.600 709v13.200h13.200" stroke-width="1.500"/>
<rect x="362.5" y="706.500" width="19" height="19" fill="#4f6a8c" stroke="#5cb0f5" stroke-width="1"/><circle cx="371.400" cy="716.200" r="5.800" stroke-width="1.400"/><path d="M371.400 716.200h7.500M371.400 716.200l7-6.500" stroke="#4aa8f5" stroke-width="1.200"/>
<rect x="386.5" y="706.500" width="19" height="19" fill="#4f6a8c" stroke="#5cb0f5" stroke-width="1"/><rect x="389.200" y="709.700" width="13" height="12.800" stroke-width="1.400"/><rect x="389" y="709.500" width="3.800" height="3.800" stroke="#e23a3a" stroke-width="1.100"/>
<path d="M425 710.400l-12 11.200h13.600" stroke-width="1.400"/><rect x="417.800" y="714.300" width="3" height="3" fill="#333a45" stroke="#4aa8f5" stroke-width="1"/>
<rect x="434.5" y="706.500" width="19" height="19" fill="#4f6a8c" stroke="#5cb0f5" stroke-width="1"/><path d="M438.300 709.500v12.700h12.200M438.300 722.200l7.500-7.500M436.800 711.300l1.500-1.800l1.500 1.800M448.700 720.700l1.800 1.500l-1.800 1.500" stroke-width="1.100"/><path d="M449.500 708.300l-4.300 5.200h2.700l-1.500 4.300l5.500-6h-3l2-3.500z" fill="#fcc419" stroke="none"/>
<rect x="458.5" y="706.500" width="19" height="19" fill="#4f6a8c" stroke="#5cb0f5" stroke-width="1"/><path d="M460.800 714h7M464.300 710.500v7" stroke-width="1.500"/><rect x="466.500" y="716.800" width="8.500" height="4" stroke="#5cb0f5" stroke-width="1.300"/>
<path d="M486 711.300h12.600" stroke-width="1.800"/><path d="M486 715.500h12.600" stroke-width="2.300"/><path d="M486 719.900h12.600" stroke-width="3.400"/>
<path d="M508.800 712.600h7.200M512.400 709v7.200" stroke-width="1.500"/><rect x="514.800" y="714.800" width="4.200" height="4.200" fill="#fff" stroke="none"/><rect x="517.600" y="717.600" width="4.200" height="4.200" fill="#333a45" stroke="#4aa8f5" stroke-width="1.200"/>
<rect x="530.5" y="706.500" width="19" height="19" fill="#4f6a8c" stroke="#5cb0f5" stroke-width="1"/><path d="M537 709.500h10.500v10.500M540.500 709.500v4M544 709.500v9M537 713h10.500M541 716.500h6.500" stroke="#e8ecf2" stroke-width="1.200"/><rect x="532.700" y="713.500" width="8.600" height="8.600" fill="#4f6a8c" stroke="#5cb0f5" stroke-width="1.200" stroke-dasharray="2 1"/><rect x="535.500" y="716.300" width="3" height="3" stroke="#5cb0f5" stroke-width="1"/><path d="M547.500 718.500v4h-5M544.500 720.500l-2 2l2 2" stroke="#f3b040" stroke-width="1.100"/>
</svg>
</div>
</body></html>
